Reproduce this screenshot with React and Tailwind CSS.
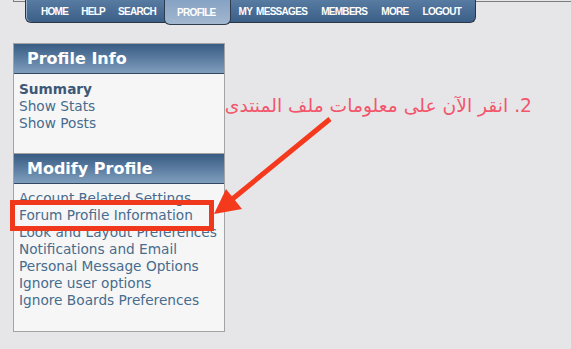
const NAV_LEFT = ['HOME', 'HELP', 'SEARCH']
const NAV_RIGHT = ['MY MESSAGES', 'MEMBERS', 'MORE', 'LOGOUT']

const PROFILE_INFO = ['Show Stats', 'Show Posts']
const MODIFY_PROFILE = [
  'Account Related Settings',
  'Forum Profile Information',
  'Look and Layout Preferences',
  'Notifications and Email',
  'Personal Message Options',
  'Ignore user options',
  'Ignore Boards Preferences'
]

function PanelHeader({ title }) {
  return (
    <div className="flex h-[30px] items-center border-b border-[#34495f] bg-gradient-to-b from-[#385c83] to-[#809ebe] pl-[13px] text-[16px] font-bold text-white">
      {title}
    </div>
  )
}

export default function App() {
  return (
    <div className="relative h-[349px] w-[571px] overflow-hidden bg-[#e6e6e9] font-['DejaVu_Sans',sans-serif]">
      {/* top strip */}
      <div className="ml-[13px] h-[2px] border-b border-l border-[#7c7c7c]" />

      {/* main tabs */}
      <nav className="relative z-10 -mt-[2px] ml-[25px] flex h-[23px] w-fit items-start rounded-b-[6px] border border-t-0 border-[#2a3544] bg-gradient-to-b from-[#587ba2] to-[#3c5f88] font-['Liberation_Sans_Narrow','Arial_Narrow','Liberation_Sans',sans-serif] text-[10px] font-bold tracking-[-0.7px] text-white shadow-[inset_1px_0_0_#9db3cc] [word-spacing:2px]">
        <div className="flex h-[22px] items-center gap-[13px] pl-[15px]">
          {NAV_LEFT.map(item => (
            <span key={item}>{item}</span>
          ))}
        </div>
        <div className="ml-[8px] mr-[8px] flex h-[25px] items-center rounded-b-[6px] border border-t-0 border-[#2f3c4d] bg-gradient-to-b from-[#86a2c3] to-[#a2b7d0] pl-[12px] pr-[14px]">
          PROFILE
        </div>
        <div className="flex h-[22px] items-center gap-[14px] pr-[14px]">
          {NAV_RIGHT.map(item => (
            <span key={item}>{item}</span>
          ))}
        </div>
      </nav>

      {/* side panel */}
      <div className="ml-[13px] mt-[20px] h-[289px] w-[212px] border border-[#a3a3a3] bg-[#f6f6f6]">
        <PanelHeader title="Profile Info" />
        <div className="h-[79px] px-[5px] pt-[7px] text-[13.7px] leading-[17px] text-[#476c8e]">
          <div className="font-bold text-[#3d5876]">Summary</div>
          {PROFILE_INFO.map(item => (
            <div key={item}>{item}</div>
          ))}
        </div>
        <div className="border-t border-[#a3a3a3]">
          <PanelHeader title="Modify Profile" />
        </div>
        <div className="px-[5px] pt-[6px] text-[13.7px] leading-[17px] text-[#476c8e]">
          {MODIFY_PROFILE.map(item => (
            <div key={item}>{item}</div>
          ))}
        </div>
      </div>

      {/* annotation */}
      <div className="absolute left-[10px] top-[200px] h-[31px] w-[204px] border-[5px] border-[#f0381c]" />
      <div
        dir="rtl"
        className="absolute right-[39px] top-[95px] text-[18.7px] leading-[22px] text-[#f2566b]"
      >
        2. انقر الآن على معلومات ملف المنتدى
      </div>
      <svg className="absolute left-0 top-0" width="571" height="349" viewBox="0 0 571 349">
        <line x1="330" y1="119" x2="230" y2="201" stroke="#f5391c" strokeWidth="5" />
        <polygon points="214,214 226,189 242,209" fill="#f5391c" />
      </svg>
    </div>
  )
}
